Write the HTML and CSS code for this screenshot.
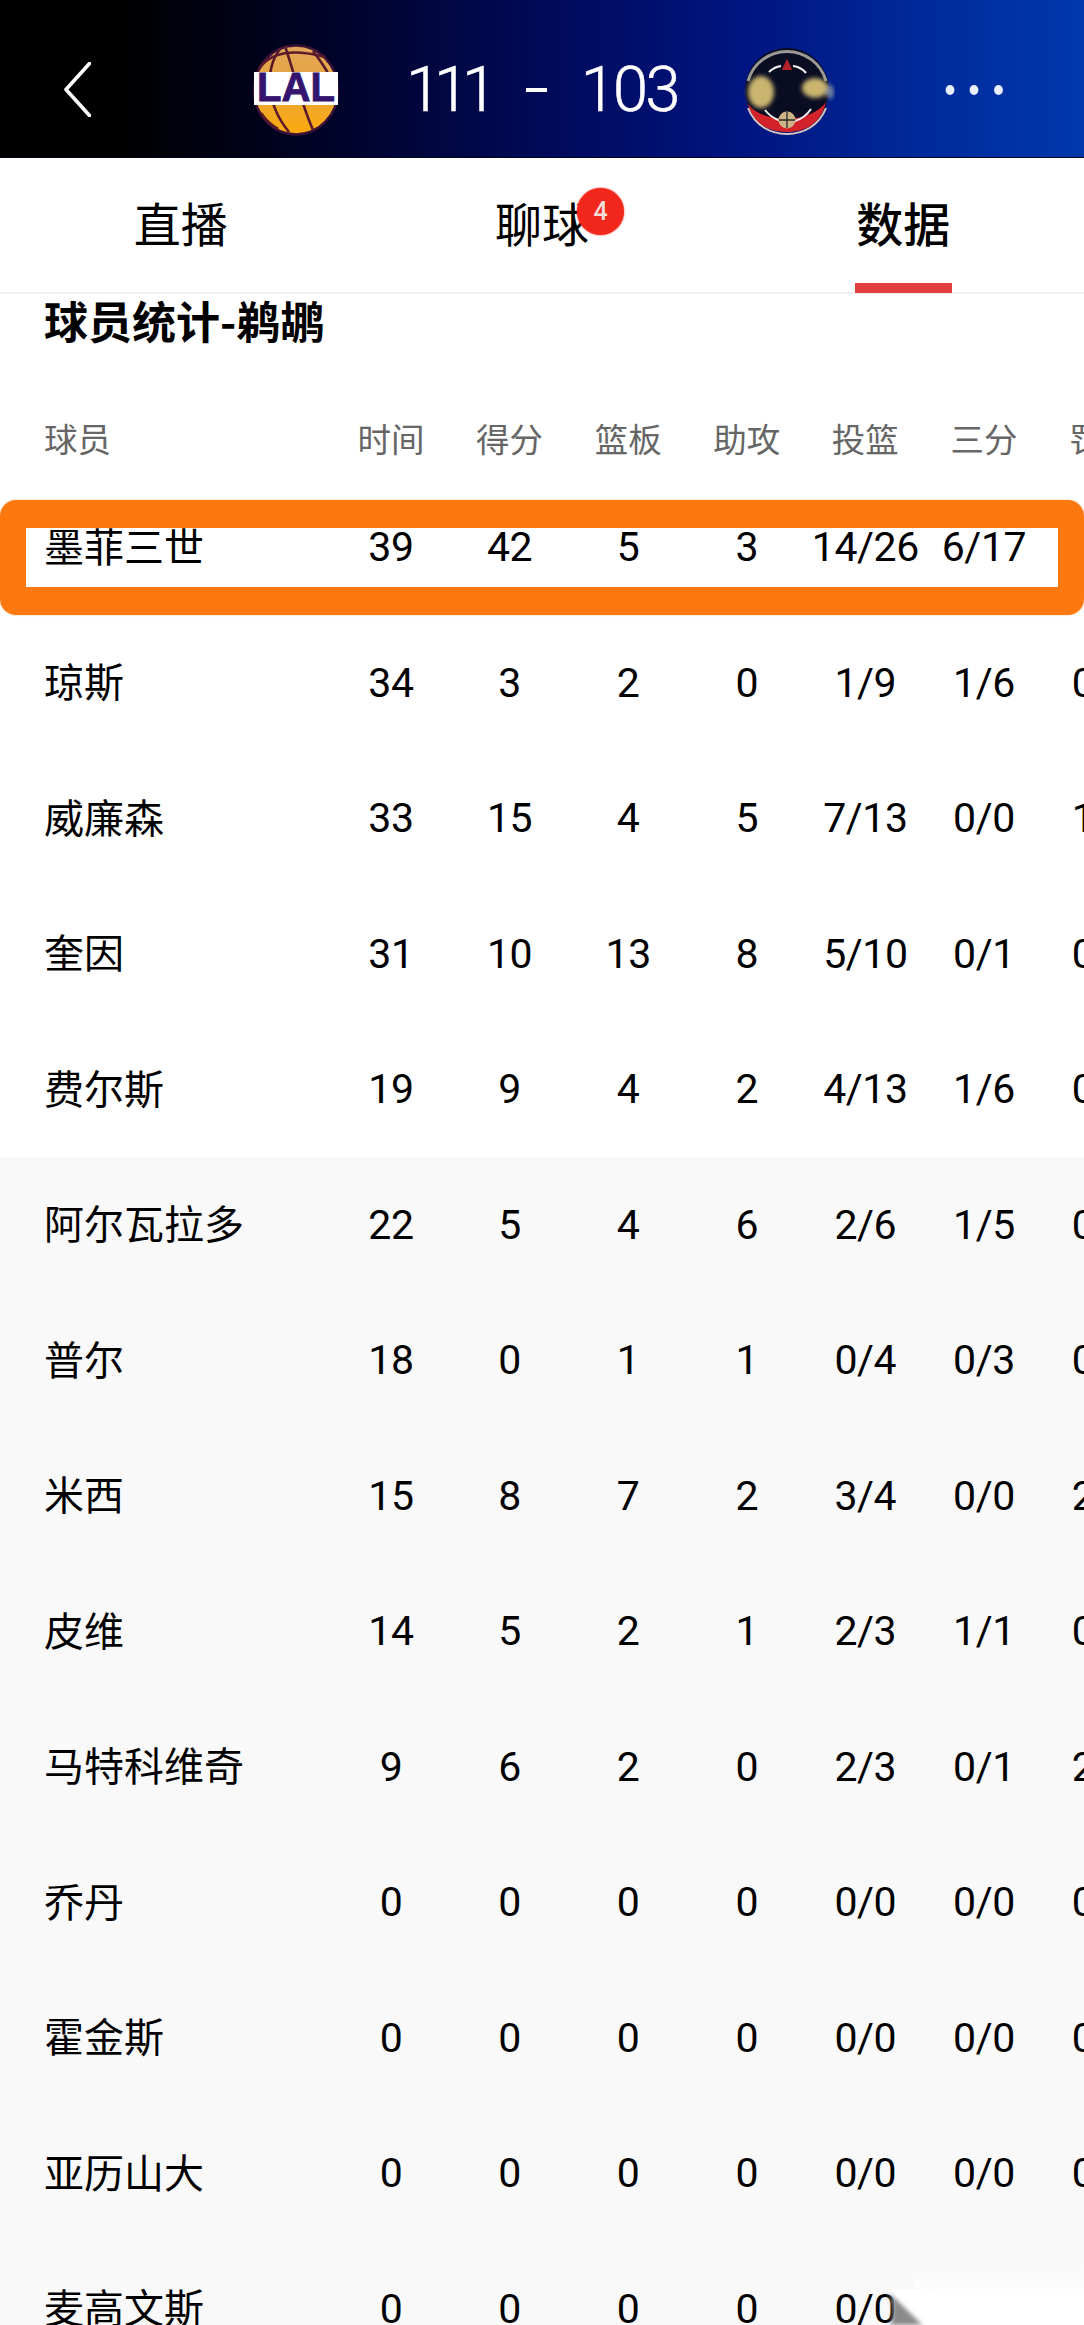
FILE: index.html
```html
<!DOCTYPE html>
<html lang="zh">
<head>
<meta charset="utf-8">
<title>球员统计</title>
<link rel="stylesheet" href="styles.css">
</head>
<body>
<div class="page">
  <header class="topbar">
    <svg class="back" width="27" height="55" viewBox="0 0 27 55"><path d="M25.5 1.5 L2 27.5 L25.5 53.5" fill="none" stroke="#fff" stroke-width="3.6" stroke-linecap="round" stroke-linejoin="round"/></svg>
    <svg class="logo logo-lal" width="90" height="94" viewBox="0 0 90 94">
      <defs><linearGradient id="ball" x1="0" y1="0" x2="0" y2="1"><stop offset="0" stop-color="#e2a55a"/><stop offset=".5" stop-color="#e8a63a"/><stop offset="1" stop-color="#fdaa0c"/></linearGradient></defs>
      <ellipse cx="45" cy="47" rx="42" ry="44.5" fill="url(#ball)" stroke="#3a1238" stroke-width="2.5"/>
      <g fill="none" stroke="#5b1a2c" stroke-width="2.6">
        <path d="M34 3 C42 26 50 60 62 87"/>
        <path d="M8 26 C20 8 44 6 74 14"/>
        <path d="M30 5 C14 24 14 60 38 89"/>
        <path d="M62 8 C74 24 82 34 85 58"/>
        <path d="M10 70 C14 76 20 82 27 86"/>
      </g>
      <rect x="3" y="29" width="84" height="33" fill="#fff"/>
      <text class="lal-text" x="45" y="58" text-anchor="middle" textLength="78" lengthAdjust="spacingAndGlyphs">LAL</text>
    </svg>
    <div class="score">
      <span class="score-home">111</span><span class="dash"></span><span class="score-away">103</span>
    </div>
    <svg class="logo logo-opp" width="94" height="96" viewBox="0 0 94 96">
      <defs>
        <filter id="soft" x="-30%" y="-30%" width="160%" height="160%"><feGaussianBlur stdDeviation="2"/></filter>
        <filter id="soft2" x="-30%" y="-30%" width="160%" height="160%"><feGaussianBlur stdDeviation=".7"/></filter>
      </defs>
      <circle cx="46" cy="48" r="42" fill="#0a0d22"/>
      <g filter="url(#soft2)">
        <path d="M7 39 A40.5 40.5 0 0 1 85 39" fill="none" stroke="#9b9a96" stroke-width="3"/>
        <path d="M7 62 C22 82 70 82 85 60 C80 82 64 90 46 90 C28 90 12 82 7 62 Z" fill="#d3202a"/>
        <path d="M7 66 C14 84 30 92 46 92 C62 92 78 84 85 66" fill="none" stroke="#d8c8bc" stroke-width="2"/>
        <path d="M46 17 l3 6 l2 5 h-10 l2 -5 Z" fill="#b3202c"/>
        <g fill="none" stroke="#f2f2f2" stroke-width="2">
          <path d="M28 30 Q33 25 40 24"/><path d="M52 24 Q60 25 65 31"/>
          <path d="M24 68 Q30 76 40 79"/><path d="M54 79 Q64 76 70 67"/>
        </g>
        <circle cx="46" cy="78" r="8.5" fill="#cdb486"/>
        <path d="M38 78 H54 M46 70 V86" stroke="#2a2a2a" stroke-width="1.3"/>
      </g>
      <g filter="url(#soft)">
        <ellipse cx="20" cy="50" rx="13" ry="16" fill="#c9b46f"/>
        <ellipse cx="74" cy="46" rx="13" ry="10" fill="#c9b46f"/>
        <ellipse cx="89" cy="50" rx="4" ry="7" fill="#6f7f9c"/>
      </g>
    </svg>
    <svg class="more" width="60" height="12" viewBox="0 0 60 12"><ellipse cx="6" cy="6" rx="4.4" ry="5" fill="#e8f0ff"/><ellipse cx="30" cy="6" rx="4.4" ry="5" fill="#e8f0ff"/><ellipse cx="54.500" cy="6" rx="4.400" ry="5" fill="#e8f0ff"/></svg>
  </header>

  <nav class="tabs">
    <div class="tab"><span class="tab-label">直播</span></div>
    <div class="tab"><span class="tab-label">聊球<span class="badge">4</span></span></div>
    <div class="tab tab-active"><span class="tab-label">数据</span></div>
  </nav>

  <main class="stats">
    <h2 class="stats-title">球员统计-鹈鹕</h2>
    <div class="row row-head">
      <div class="name">球员</div><div>时间</div><div>得分</div><div>篮板</div><div>助攻</div><div>投篮</div><div>三分</div><div>罚球</div>
    </div>
    <div class="row row-marked"><div class="name">墨菲三世</div><div>39</div><div>42</div><div>5</div><div>3</div><div>14/26</div><div>6/17</div><div>8/8</div><span class="marker"></span></div>
    <div class="row"><div class="name">琼斯</div><div>34</div><div>3</div><div>2</div><div>0</div><div>1/9</div><div>1/6</div><div>0/0</div></div>
    <div class="row"><div class="name">威廉森</div><div>33</div><div>15</div><div>4</div><div>5</div><div>7/13</div><div>0/0</div><div>1/1</div></div>
    <div class="row"><div class="name">奎因</div><div>31</div><div>10</div><div>13</div><div>8</div><div>5/10</div><div>0/1</div><div>0/0</div></div>
    <div class="row"><div class="name">费尔斯</div><div>19</div><div>9</div><div>4</div><div>2</div><div>4/13</div><div>1/6</div><div>0/0</div></div>
    <div class="row row-bench"><div class="name">阿尔瓦拉多</div><div>22</div><div>5</div><div>4</div><div>6</div><div>2/6</div><div>1/5</div><div>0/0</div></div>
    <div class="row row-bench"><div class="name">普尔</div><div>18</div><div>0</div><div>1</div><div>1</div><div>0/4</div><div>0/3</div><div>0/0</div></div>
    <div class="row row-bench"><div class="name">米西</div><div>15</div><div>8</div><div>7</div><div>2</div><div>3/4</div><div>0/0</div><div>2/2</div></div>
    <div class="row row-bench"><div class="name">皮维</div><div>14</div><div>5</div><div>2</div><div>1</div><div>2/3</div><div>1/1</div><div>0/0</div></div>
    <div class="row row-bench"><div class="name">马特科维奇</div><div>9</div><div>6</div><div>2</div><div>0</div><div>2/3</div><div>0/1</div><div>2/2</div></div>
    <div class="row row-bench"><div class="name">乔丹</div><div>0</div><div>0</div><div>0</div><div>0</div><div>0/0</div><div>0/0</div><div>0/0</div></div>
    <div class="row row-bench"><div class="name">霍金斯</div><div>0</div><div>0</div><div>0</div><div>0</div><div>0/0</div><div>0/0</div><div>0/0</div></div>
    <div class="row row-bench"><div class="name">亚历山大</div><div>0</div><div>0</div><div>0</div><div>0</div><div>0/0</div><div>0/0</div><div>0/0</div></div>
    <div class="row row-bench"><div class="name">麦高文斯</div><div>0</div><div>0</div><div>0</div><div>0</div><div>0/0</div></div>
  </main>

  <svg class="corner" width="214" height="60" viewBox="0 0 214 60">
    <defs>
      <linearGradient id="fade" x1="0" y1="0" x2="0" y2="1"><stop offset="0" stop-color="#fff" stop-opacity="0"/><stop offset=".55" stop-color="#fff"/></linearGradient>
      <filter id="cornerblur" x="-40%" y="-40%" width="180%" height="180%"><feGaussianBlur stdDeviation="2.2"/></filter>
    </defs>
    <path d="M40 0 H214 V60 H54 Z" fill="url(#fade)"/>
    <path d="M15 25 L54 60 H130 L56 25 Z" fill="#fff"/>
    <path d="M18 27 C24 32 34 42 52 60 H20 C24 52 24 38 18 27 Z" fill="#8a8a8a" filter="url(#cornerblur)"/>
  </svg>
</div>
</body>
</html>
```
FILE: styles.css
```css
* { box-sizing: border-box; }
html, body { margin: 0; padding: 0; background: #fff; }
body { font-family: "Noto Sans CJK SC", "Noto Sans", sans-serif; color: #000; }
.page { position: relative; width: 1084px; height: 2325px; overflow: hidden; background: #fff; }

.topbar {
  display: flex;
  align-items: center;
  height: 158px;
  padding: 22px 0 0 64px;
  background: linear-gradient(90deg, #000 0%, #000 11%, #000327 30%, #000a58 50%, #001480 68%, #002a9a 85%, #0038ac 100%);
  border-bottom: 1px solid #00051f;
}
.back { flex: none; }
.logo { flex: none; display: block; }
.logo-lal { margin-left: 160px; }
.lal-text {
  font-family: "Liberation Sans", sans-serif;
  font-weight: 700;
  font-size: 40px;
  fill: #34146f;
  stroke: #34146f;
  stroke-width: .8px;
}
.score {
  flex: none;
  display: flex;
  align-items: center;
  margin-left: 65px;
  width: 272px;
  font-family: Roboto, sans-serif;
  font-weight: 300;
  font-size: 63px;
  line-height: 1;
  color: #fff;
  -webkit-text-stroke: .6px #fff;
}
.score-home { letter-spacing: -7px; }
.score-away { margin-left: 34px; letter-spacing: -2.5px; }
.dash { width: 21px; height: 4px; margin-left: 36px; background: #fff; }
.logo-opp { margin-left: 63px; }
.more { flex: none; margin-left: 109px; }

.tabs { display: flex; height: 136px; border-bottom: 2px solid #f0f0f0; }
.tab {
  position: relative;
  flex: 1;
  display: flex;
  justify-content: center;
  padding-top: 30px;
  font-size: 47px;
  line-height: 68px;
}
.tab-label { position: relative; }
.tab-active .tab-label { font-weight: 500; }
.tab-active::after {
  content: "";
  position: absolute;
  left: 50%;
  bottom: -1px;
  width: 97px;
  height: 10px;
  margin-left: -48px;
  background: #e2403f;
}
.badge {
  position: absolute;
  left: 82px;
  top: 0;
  width: 47px;
  height: 47px;
  border-radius: 50%;
  background: #f1271c;
  box-shadow: 0 0 2px #f1271c;
  color: #f7dcd8;
  font-family: Roboto, sans-serif;
  font-size: 25px;
  font-weight: 500;
  line-height: 47px;
  text-align: center;
}

.stats-title {
  margin: 0 0 46.5px;
  padding: 0 0 3px 44px;
  height: 58px;
  font-size: 44px;
  font-weight: 700;
  line-height: 52px;
}
.row {
  position: relative;
  display: grid;
  grid-template-columns: 287.7px repeat(7, 118.6px);
  align-items: center;
  width: 1200px;
  height: 135.5px;
  padding-left: 44px;
  font-family: Roboto, "Noto Sans CJK SC", sans-serif;
  font-size: 41px;
  line-height: 50px;
  letter-spacing: -.4px;
  text-align: center;
  color: #000;
}
.row > .name {
  padding-bottom: 5px;
  font-family: "Noto Sans CJK SC", sans-serif;
  font-size: 40px;
  letter-spacing: 0;
  text-align: left;
}
.row-head {
  height: 81px;
  padding-bottom: 3px;
  font-family: "Noto Sans CJK SC", sans-serif;
  font-size: 33.5px;
  letter-spacing: 0;
  color: #666;
}
.row-head > .name { padding-bottom: 0; font-size: 33.5px; }
.row-bench { background: #f9f9f9; }
.marker {
  position: absolute;
  left: 0;
  top: 20.5px;
  width: 1084px;
  bottom: 0;
  border: solid #fe7810;
  border-width: 28px 26px;
  border-radius: 16px;
  box-shadow: 0 0 2px #ffb877;
}
.corner { position: absolute; right: 0; bottom: 0; display: block; }
```
